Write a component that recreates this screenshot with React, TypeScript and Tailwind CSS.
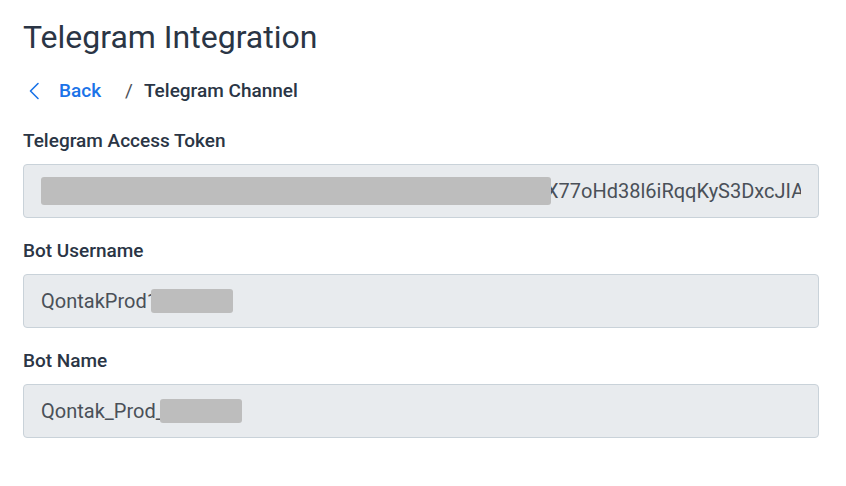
import React from 'react';

const font = { fontFamily: 'Roboto, "Noto Sans", sans-serif' };

function Blur({ w, h }: { w: number; h: number }) {
  // redacted block over the value
  return <span className="relative z-10 inline-block shrink-0 rounded-[3px] bg-[#bdbdbd]" style={{ width: w, height: h }} />;
}

function Field({ label, children }: { label: string; children: React.ReactNode }) {
  return (
    <div className="flex flex-col">
      <label className="text-[19px] font-medium leading-[22px] text-[#2a3545]">{label}</label>
      <div className="mt-[12px] flex h-[54px] items-center rounded-[4px] border border-[#c9d2d9] bg-[#e8ebee] px-[17px] text-[20px] text-[#4a5058]">
        <div className="flex min-w-0 flex-1 items-center overflow-hidden whitespace-nowrap">{children}</div>
      </div>
    </div>
  );
}

export default function App() {
  return (
    <div className="min-h-screen bg-white pl-[23px] pr-[27px] pt-[17px]" style={font}>
      <h1 className="text-[32px] font-normal leading-[40px] text-[#2a3545]">Telegram Integration</h1>

      <div className="mt-[22px] flex items-center text-[19px] font-medium leading-[24px]">
        <a href="#" className="flex items-center text-[#1a73e8]">
          <svg width="14" height="18" viewBox="0 0 14 18" fill="none" className="ml-[4px]">
            <path d="M11 1.5 L3.5 9 L11 16.5" stroke="#1a73e8" strokeWidth="1.6" strokeLinecap="round" strokeLinejoin="round" />
          </svg>
          <span className="ml-[18px]">Back</span>
        </a>
        <span className="ml-[24px] font-normal text-[#4a5058]">/</span>
        <span className="ml-[11px] text-[#2a3545]">Telegram Channel</span>
      </div>

      <div className="mt-[27px] flex flex-col gap-[22px]">
        <Field label="Telegram Access Token">
          <Blur w={510} h={28} />
          <span className="-ml-[5px] shrink-0">X77oHd38l6iRqqKyS3DxcJIAaBfZ9e</span>
        </Field>
        <Field label="Bot Username">
          <span className="shrink-0">QontakProd1</span>
          <span className="-ml-[7px] flex shrink-0 items-center"><Blur w={82} h={24} /></span>
        </Field>
        <Field label="Bot Name">
          <span className="shrink-0">Qontak_Prod_</span>
          <span className="-ml-[5px] flex shrink-0 items-center"><Blur w={82} h={24} /></span>
        </Field>
      </div>
    </div>
  );
}
